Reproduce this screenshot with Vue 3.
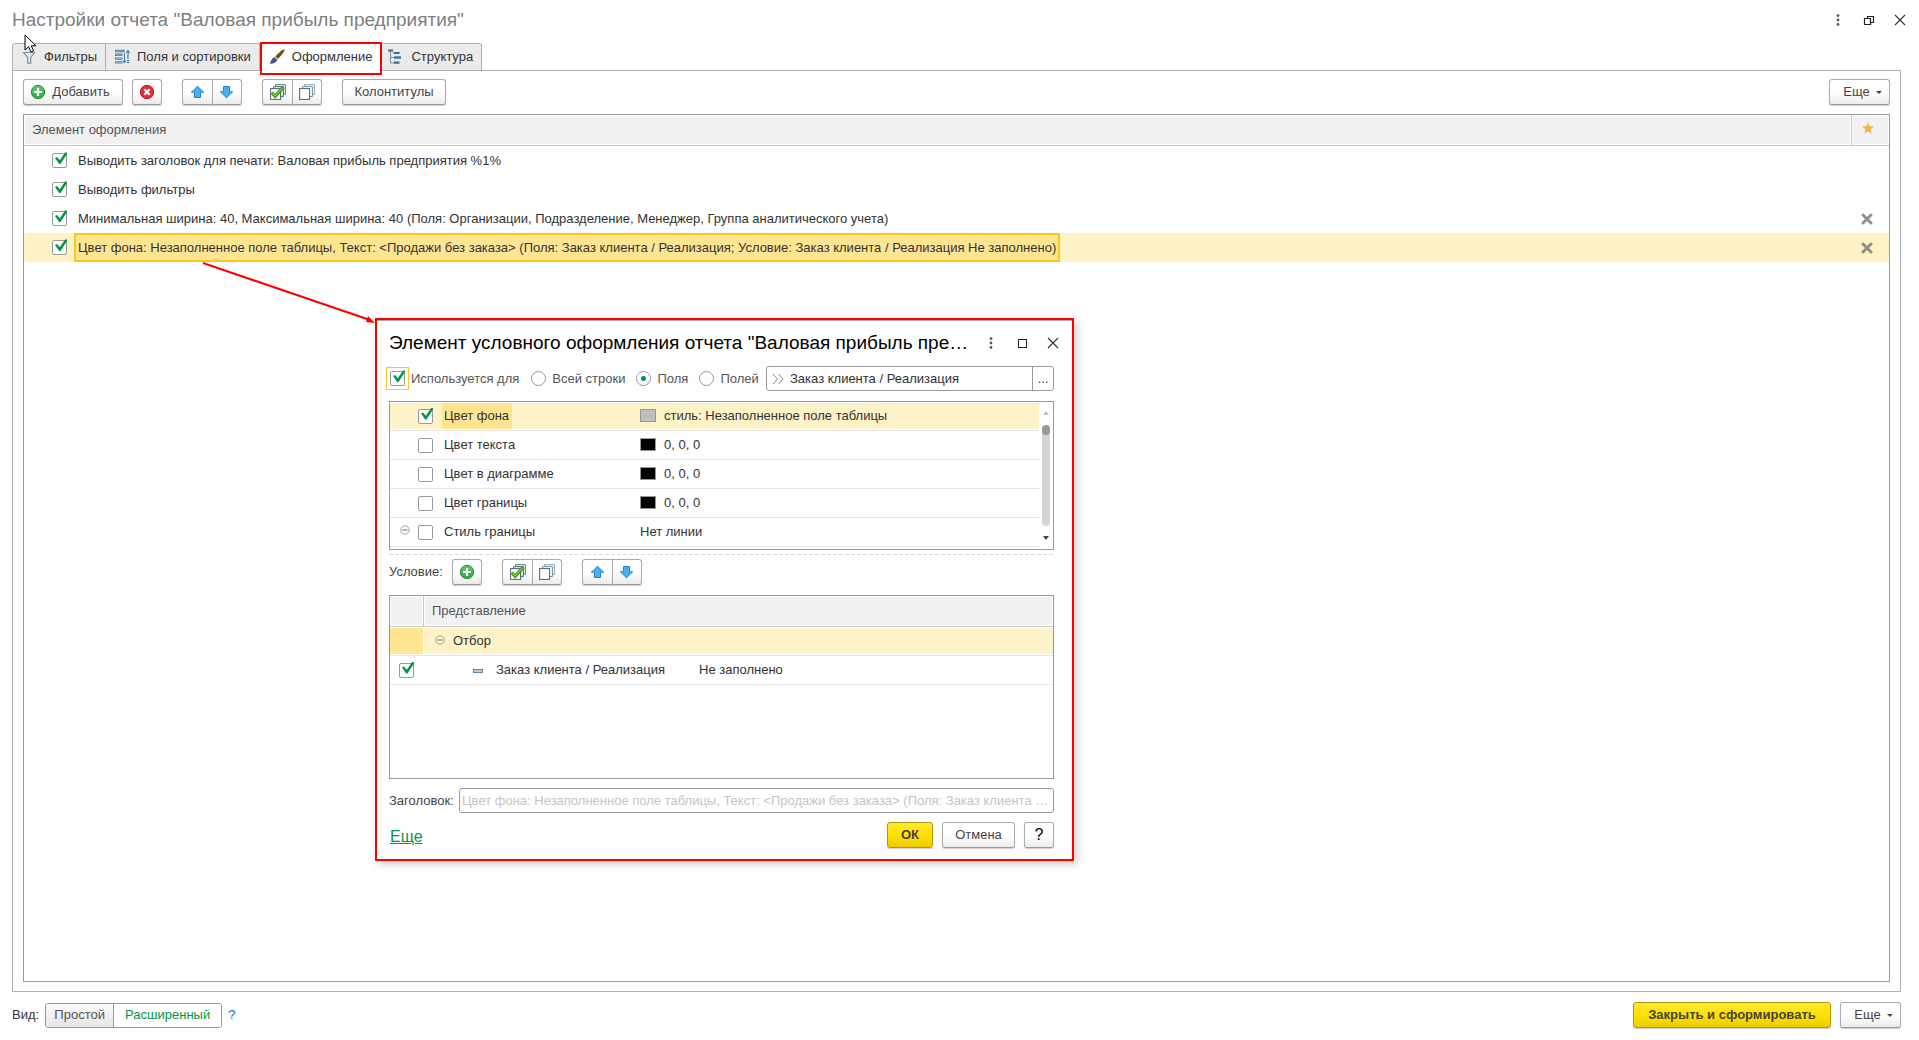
<script setup>
import { ref } from 'vue'

const tabs = [
  { id: 'filters', title: 'Фильтры', icon: 'i-funnel' },
  { id: 'fields', title: 'Поля и сортировки', icon: 'i-fields' },
  { id: 'design', title: 'Оформление', icon: 'i-brush' },
  { id: 'structure', title: 'Структура', icon: 'i-tree' }
]
const activeTab = ref('design')

const fullTitle =
  'Цвет фона: Незаполненное поле таблицы, Текст: <Продажи без заказа> (Поля: Заказ клиента / Реализация; Условие: Заказ клиента / Реализация Не заполнено)'

const items = ref([
  { on: true, text: 'Выводить заголовок для печати: Валовая прибыль предприятия %1%' },
  { on: true, text: 'Выводить фильтры' },
  {
    on: true,
    text: 'Минимальная ширина: 40, Максимальная ширина: 40 (Поля: Организации, Подразделение, Менеджер, Группа аналитического учета)',
    removable: true
  },
  { on: true, text: fullTitle, removable: true, selected: true }
])

const scope = ref('field')
const scopes = [
  { id: 'row', title: 'Всей строки' },
  { id: 'field', title: 'Поля' },
  { id: 'fields', title: 'Полей' }
]
const used = ref(true)
const field = ref('Заказ клиента / Реализация')
const caption = ref('')

const props = ref([
  { on: true, name: 'Цвет фона', swatch: 'grey', value: 'стиль: Незаполненное поле таблицы', selected: true },
  { on: false, name: 'Цвет текста', swatch: 'black', value: '0, 0, 0' },
  { on: false, name: 'Цвет в диаграмме', swatch: 'black', value: '0, 0, 0' },
  { on: false, name: 'Цвет границы', swatch: 'black', value: '0, 0, 0' },
  { on: false, name: 'Стиль границы', value: 'Нет линии', group: true }
])
const conditionOn = ref(true)
</script>

<template>
  <div class="page">
    <svg class="sprite" aria-hidden="true">
      <defs>
        <linearGradient id="g-green" x1="0" y1="0" x2="0" y2="1">
          <stop offset="0" stop-color="#5cc96b" /><stop offset="1" stop-color="#2fa745" />
        </linearGradient>
      </defs>
      <symbol id="i-plus" viewBox="0 0 16 16">
        <circle cx="8" cy="8" r="6.7" fill="url(#g-green)" stroke="#23913a" />
        <path d="M8 4v8M4 8h8" stroke="#fff" stroke-width="2.2" fill="none" />
      </symbol>
      <symbol id="i-delete" viewBox="0 0 16 16">
        <circle cx="8" cy="8" r="6.7" fill="#dd3036" stroke="#b9171f" />
        <path d="M5.3 5.3l5.4 5.4M10.7 5.3l-5.4 5.4" stroke="#fff" stroke-width="2.2" fill="none" />
      </symbol>
      <symbol id="i-up" viewBox="0 0 16 16">
        <path d="M7.5 2.2L13.7 8.3H10.5V13.5H4.5V8.3H1.3Z" fill="#45b0ee" stroke="#2a83bd" />
      </symbol>
      <symbol id="i-down" viewBox="0 0 16 16">
        <path d="M7.5 13.8L13.7 7.7H10.5V2.5H4.5V7.7H1.3Z" fill="#45b0ee" stroke="#2a83bd" />
      </symbol>
      <symbol id="i-stack" viewBox="0 0 16 16">
        <path d="M5.5 3V.6H15.4V10.5H13" fill="none" stroke="#8da3b3" />
        <path d="M3.5 5V2.6H13.4V12.5H11" fill="#fff" stroke="#6f8a9e" />
        <rect x=".6" y="4.6" width="10" height="10.8" fill="#fff" stroke="#44647c" />
      </symbol>
      <symbol id="i-stackcheck" viewBox="0 0 16 16">
        <path d="M5.5 3V.6H15.4V10.5H13" fill="#dfe9dc" stroke="#6d8593" />
        <path d="M3.5 5V2.6H13.4V12.5H11" fill="#dfe9dc" stroke="#55727e" />
        <rect x=".6" y="4.6" width="10" height="10.8" fill="#fff" stroke="#44647c" />
        <path d="M2 8.6l3.2 3.6L13 3.4" fill="none" stroke="#3c8d17" stroke-width="3.4" />
        <path d="M2.6 9.1l2.6 2.9L12.4 4" fill="none" stroke="#7ed321" stroke-width="1.5" />
      </symbol>
      <symbol id="i-funnel" viewBox="0 0 16 16">
        <path d="M2.5 3.5H13.5L9.7 8.5V14.2H6.7V8.5Z" fill="#e4e9ed" stroke="#8194a3" stroke-width="1.2" />
      </symbol>
      <symbol id="i-fields" viewBox="0 0 16 16">
        <path d="M1 2H10.5M1 5.8H8.5M1 9.6H8.5M1 13.4H8.5" fill="none" stroke="#4d7a9c" stroke-width="2.4" />
        <path d="M1.5 2H9M1.5 5.8H8M1.5 9.6H8M1.5 13.4H8" fill="none" stroke="#b6cbda" stroke-width=".7" />
        <path d="M10.5 4V13.5M9 11.6L10.5 14L12 11.6" fill="none" stroke="#2a7fb8" />
        <path d="M14 10V1.5M12.3 4L14 1.5L15.7 4" fill="none" stroke="#34658a" />
        <path d="M14 11V15" fill="none" stroke="#34658a" stroke-width="2" stroke-dasharray="1 1" />
      </symbol>
      <symbol id="i-brush" viewBox="0 0 16 16">
        <path d="M15.6.3C16.2 1.3 13 6 9 10L6.3 7.5C9.5 3.7 14.3-.2 15.6.3Z" fill="#7a4a0c" />
        <path d="M6.3 7.5L9 10L8 11L5.3 8.5Z" fill="#b9bcc4" />
        <path d="M5.2 8.3L8.2 11.1C7.6 13.8 3.6 15.6.3 14.3C2.6 13.3 2 9 5.2 8.3Z" fill="#4c4f8c" />
      </symbol>
      <symbol id="i-tree" viewBox="0 0 16 16">
        <path d="M2.5 2V14H7M2.5 8.5H7M4.5 3.8H7" fill="none" stroke="#7d8f9c" />
        <path d="M0 .6H5V2.6H0zM6 2.9H11.5V4.9H6zM6 12.6H11.5V14.8H6z" fill="#4f6a7e" />
        <path d="M6 7.3H13V9.7H6z" fill="#1f7fc4" />
      </symbol>
      <symbol id="i-dots" viewBox="0 0 12 12">
        <g fill="#555"><circle cx="6" cy="1.6" r="1.4" /><circle cx="6" cy="6" r="1.4" /><circle cx="6" cy="10.4" r="1.4" /></g>
      </symbol>
      <symbol id="i-restore" viewBox="0 0 12 12">
        <path d="M4.5 4V2.5H10.5V8.5H8M1.5 4.5H7.5V10.5H1.5Z" fill="none" stroke="#222" stroke-width="1.2" />
      </symbol>
      <symbol id="i-max" viewBox="0 0 12 12">
        <rect x="2.5" y="2.5" width="8" height="8" fill="none" stroke="#222" />
      </symbol>
      <symbol id="i-close" viewBox="0 0 12 12">
        <path d="M1 1L11 11M11 1L1 11" fill="none" stroke="#333" stroke-width="1.1" />
      </symbol>
      <symbol id="i-star" viewBox="0 0 12 12">
        <path d="M6 0L7.6 4.2L12 4.5L8.6 7.3L9.7 11.6L6 9.2L2.3 11.6L3.4 7.3L0 4.5L4.4 4.2Z" fill="#fcb045" />
      </symbol>
      <symbol id="i-cross" viewBox="0 0 12 12">
        <path d="M2 2L10 10M10 2L2 10" stroke="#6b6b6b" stroke-opacity=".75" stroke-width="3" stroke-linecap="round" />
      </symbol>
      <symbol id="i-collapse" viewBox="0 0 12 12">
        <circle cx="6" cy="6" r="4.2" fill="none" stroke="#8c8c8c" stroke-width=".8" />
        <path d="M3.5 6h5" stroke="#666" />
      </symbol>
    </svg>

    <header class="titlebar">
      <h1>Настройки отчета "Валовая прибыль предприятия"</h1>
      <div class="winbtns main">
        <button type="button" aria-label="Меню"><svg><use href="#i-dots" /></svg></button>
        <button type="button" aria-label="Восстановить"><svg><use href="#i-restore" /></svg></button>
        <button type="button" aria-label="Закрыть"><svg><use href="#i-close" /></svg></button>
      </div>
    </header>

    <nav class="tabs" role="tablist">
      <button
        v-for="t in tabs"
        :key="t.id"
        type="button"
        role="tab"
        class="tab"
        :class="{ active: t.id === activeTab }"
        :aria-selected="t.id === activeTab"
        @click="activeTab = t.id"
      >
        <svg class="ico"><use :href="'#' + t.icon" /></svg>{{ t.title }}
      </button>
    </nav>

    <main class="panel">
      <div class="toolbar">
        <button type="button" class="btn add"><svg class="ico"><use href="#i-plus" /></svg>Добавить</button>
        <button type="button" class="btn icon solo" aria-label="Удалить"><svg class="ico"><use href="#i-delete" /></svg></button>
        <div class="group">
          <button type="button" class="btn icon" aria-label="Вверх"><svg class="ico"><use href="#i-up" /></svg></button>
          <button type="button" class="btn icon" aria-label="Вниз"><svg class="ico"><use href="#i-down" /></svg></button>
        </div>
        <div class="group">
          <button type="button" class="btn icon" aria-label="Включить все"><svg class="ico"><use href="#i-stackcheck" /></svg></button>
          <button type="button" class="btn icon" aria-label="Выключить все"><svg class="ico"><use href="#i-stack" /></svg></button>
        </div>
        <button type="button" class="btn wide">Колонтитулы</button>
        <button type="button" class="btn more">Еще<span class="caret"></span></button>
      </div>

      <div class="grid">
        <table class="items">
          <colgroup>
            <col class="c-tick" />
            <col />
            <col class="c-tools" />
          </colgroup>
          <thead>
            <tr>
              <th colspan="2">Элемент оформления</th>
              <th class="tools"><svg class="small"><use href="#i-star" /></svg></th>
            </tr>
          </thead>
          <tbody>
            <tr v-for="(it, i) in items" :key="i" :class="{ selected: it.selected }">
              <td class="tick"><input v-model="it.on" type="checkbox" class="check" :aria-label="it.text" /></td>
              <td class="text"><span>{{ it.text }}</span></td>
              <td class="tools">
                <button v-if="it.removable" type="button" class="bare" aria-label="Удалить строку">
                  <svg class="small"><use href="#i-cross" /></svg>
                </button>
              </td>
            </tr>
          </tbody>
        </table>
      </div>
    </main>

    <footer class="footer">
      <span>Вид:</span>
      <div class="switch">
        <button type="button">Простой</button>
        <button type="button" class="on">Расширенный</button>
      </div>
      <a href="#" class="help">?</a>
      <button type="button" class="btn primary run">Закрыть и сформировать</button>
      <button type="button" class="btn more">Еще<span class="caret"></span></button>
    </footer>

    <section class="dialog" role="dialog" aria-labelledby="dlg-title">
      <div class="dlg-head">
        <h2 id="dlg-title">Элемент условного оформления отчета "Валовая прибыль пре…</h2>
        <div class="winbtns">
          <button type="button" aria-label="Меню"><svg><use href="#i-dots" /></svg></button>
          <button type="button" aria-label="Развернуть"><svg><use href="#i-max" /></svg></button>
          <button type="button" aria-label="Закрыть"><svg><use href="#i-close" /></svg></button>
        </div>
      </div>

      <div class="scope">
        <span class="focus"><input id="used" v-model="used" type="checkbox" class="check" /></span>
        <label for="used" class="used">Используется для</label>
        <label v-for="s in scopes" :key="s.id" class="radio">
          <input v-model="scope" type="radio" name="scope" :value="s.id" />{{ s.title }}
        </label>
        <div class="picker">
          <svg class="small" viewBox="0 0 12 12"><path d="M1 1L5.5 6L1 11M6.5 1L11 6L6.5 11" fill="none" stroke="#888" /></svg>
          <input v-model="field" type="text" aria-label="Поле" />
          <button type="button">...</button>
        </div>
      </div>

      <div class="props">
        <table>
          <tbody>
            <tr v-for="p in props" :key="p.name" :class="{ selected: p.selected }">
              <td class="exp"><svg v-if="p.group" class="small"><use href="#i-collapse" /></svg></td>
              <td class="tick"><input v-model="p.on" type="checkbox" class="check" :aria-label="p.name" /></td>
              <td class="name"><span>{{ p.name }}</span></td>
              <td class="value"><i v-if="p.swatch" :class="p.swatch"></i>{{ p.value }}</td>
            </tr>
          </tbody>
        </table>
        <div class="scroll">
          <span class="arrow up"></span>
          <div class="track"><div class="thumb"></div></div>
          <span class="arrow down"></span>
        </div>
      </div>
      <div class="splitter"></div>

      <div class="toolbar cond">
        <span class="lbl">Условие:</span>
        <button type="button" class="btn icon solo" aria-label="Добавить условие"><svg class="ico"><use href="#i-plus" /></svg></button>
        <div class="group">
          <button type="button" class="btn icon" aria-label="Включить все"><svg class="ico"><use href="#i-stackcheck" /></svg></button>
          <button type="button" class="btn icon" aria-label="Выключить все"><svg class="ico"><use href="#i-stack" /></svg></button>
        </div>
        <div class="group">
          <button type="button" class="btn icon" aria-label="Вверх"><svg class="ico"><use href="#i-up" /></svg></button>
          <button type="button" class="btn icon" aria-label="Вниз"><svg class="ico"><use href="#i-down" /></svg></button>
        </div>
      </div>

      <div class="filter">
        <table>
          <colgroup>
            <col class="c-mark" />
            <col class="c-field" />
            <col />
          </colgroup>
          <thead>
            <tr><th class="mark"></th><th colspan="2">Представление</th></tr>
          </thead>
          <tbody>
            <tr class="selected">
              <td class="mark"></td>
              <td colspan="2" class="root"><svg class="small"><use href="#i-collapse" /></svg>Отбор</td>
            </tr>
            <tr>
              <td class="mark"><input v-model="conditionOn" type="checkbox" class="check" aria-label="Заказ клиента / Реализация" /></td>
              <td><span class="dash"></span>Заказ клиента / Реализация</td>
              <td>Не заполнено</td>
            </tr>
          </tbody>
        </table>
      </div>

      <div class="caption">
        <label for="caption">Заголовок:</label>
        <input id="caption" v-model="caption" type="text" :placeholder="fullTitle" />
      </div>

      <div class="actions">
        <a href="#">Еще</a>
        <button type="button" class="btn primary ok">ОК</button>
        <button type="button" class="btn cancel">Отмена</button>
        <button type="button" class="btn solo q">?</button>
      </div>
    </section>

    <svg class="pointer-line" viewBox="0 0 180 66" aria-hidden="true">
      <path d="M3 2L170 59" stroke="#f00" stroke-width="2" fill="none" />
      <path d="M175 62L166 61L168 55Z" fill="#f00" />
    </svg>
    <svg class="cursor" viewBox="0 0 14 20" aria-hidden="true">
      <path d="M1 1V16L4.6 12.7L7 18L9.6 17L7.3 11.8H12Z" fill="#fff" stroke="#000" />
    </svg>
  </div>
</template>

<style>
body {
  margin: 0;
  background: #fff;
}
</style>

<style scoped>
.page {
  position: relative;
  display: flex;
  flex-direction: column;
  box-sizing: border-box;
  min-height: 100vh;
  padding: 0 18px 12px 12px;
  font: 13px/16px "Liberation Sans", Arial, sans-serif;
  color: #333;
}
.page *,
.page *::before,
.page *::after {
  box-sizing: border-box;
}
button,
input {
  font: inherit;
  color: inherit;
  margin: 0;
}
button {
  padding: 0;
  cursor: default;
}
.sprite {
  position: absolute;
  width: 0;
  height: 0;
}
.ico {
  width: 16px;
  height: 16px;
  flex: none;
}
.small {
  width: 12px;
  height: 12px;
  flex: none;
}

/* window title */
.titlebar {
  display: flex;
  justify-content: space-between;
  align-items: center;
  height: 43px;
  padding-bottom: 3px;
}
h1,
h2 {
  margin: 0;
  font-weight: 400;
  font-size: 19px;
  line-height: 24px;
}
h1 {
  color: #808080;
}
.winbtns {
  display: flex;
  gap: 19px;
}
.winbtns.main {
  margin-right: -5px;
}
.winbtns button,
.bare {
  display: flex;
  border: 0;
  background: none;
}
.winbtns svg {
  width: 12px;
  height: 12px;
}

/* tabs */
.tabs {
  display: flex;
  height: 28px;
  margin-bottom: -1px;
}
.tab {
  display: flex;
  align-items: center;
  gap: 7px;
  padding: 0 8px;
  border: 1px solid #b0b0b0;
  border-left-width: 0;
  background: #ebebeb;
}
.tab:first-child {
  border-left-width: 1px;
  border-top-left-radius: 3px;
}
.tab:last-child {
  padding-left: 6px;
  border-top-right-radius: 3px;
}
.tab.active {
  position: relative;
  height: 33px;
  margin-top: -1px;
  padding: 0 8px 4px 7px;
  border: 2px solid #f00;
  background: #fff;
}

/* main panel */
.panel {
  display: flex;
  flex-direction: column;
  flex: 1;
  padding: 8px 10px 9px;
  border: 1px solid #b0b0b0;
}
.toolbar {
  display: flex;
  align-items: center;
}
.btn {
  display: flex;
  align-items: center;
  justify-content: center;
  height: 26px;
  border: 1px solid #ababab;
  border-bottom-color: #999;
  border-radius: 3px;
  background: linear-gradient(#fff 50%, #ececec);
  box-shadow: 0 1px 1px #ccc;
  color: #444;
}
.add {
  width: 100px;
  gap: 6px;
  margin-right: 9px;
  padding-right: 6px;
}
.solo {
  width: 30px;
}
.group {
  display: flex;
  margin-left: 20px;
}
.group .btn {
  width: 30px;
}
.group .btn:first-child {
  width: 31px;
  border-radius: 3px 0 0 3px;
}
.group .btn:last-child {
  margin-left: -1px;
  border-radius: 0 3px 3px 0;
}
.wide {
  width: 104px;
  margin-left: 20px;
}
.more {
  width: 61px;
  gap: 6px;
  padding-left: 6px;
}
.toolbar .more {
  margin-left: auto;
}
.caret {
  border: 3px solid transparent;
  border-top-color: #444;
  border-bottom-width: 0;
}
.grid {
  flex: 1;
  margin-top: 9px;
  border: 1px solid #999;
}
table {
  width: 100%;
  border-spacing: 0;
  table-layout: fixed;
}
th,
td {
  padding: 0;
  text-align: left;
  font-weight: 400;
  white-space: nowrap;
}
th {
  height: 31px;
  border-bottom: 1px solid #c8c8c8;
  background: #f1f1f1;
  box-shadow: inset 0 0 0 1px #fff;
  color: #555;
}
td {
  height: 29px;
}
.c-tick {
  width: 50px;
}
.c-tools {
  width: 38px;
}
.items thead th:first-child {
  padding-left: 8px;
}
.items .tick {
  padding-left: 28px;
}
.items .tools {
  padding-left: 10px;
}
.items th.tools {
  border-left: 1px solid #c8c8c8;
}
.items .text span {
  display: inline-block;
  padding: 4px 2px;
  border: 2px solid transparent;
  line-height: 17px;
  vertical-align: top;
}
.selected td {
  background: #fdf2c8;
}
.items .selected .text span {
  border-color: #fcc81e;
  background: #ffe591;
}

/* tick box with a mark that rises over its frame */
.check {
  position: relative;
  display: block;
  appearance: none;
  width: 15px;
  height: 15px;
  border: 1px solid #999;
  border-radius: 2px;
  background: #fff;
}
.check:checked::after {
  content: "";
  position: absolute;
  left: 2px;
  top: -2px;
  width: 12px;
  height: 12px;
  background: #009646;
  clip-path: polygon(0 50%, 17% 42%, 40% 68%, 84% 4%, 100% 4%, 100% 16%, 46% 100%, 34% 100%);
}

/* bottom bar */
.footer {
  display: flex;
  align-items: center;
  margin-top: 10px;
}
.switch {
  display: flex;
  height: 25px;
  margin: 0 6px;
  border: 1px solid #999;
  border-radius: 3px;
  overflow: hidden;
}
.switch button {
  width: 67px;
  border: 0;
  background: linear-gradient(#fafafa, #e6e6e6);
  color: #555;
}
.switch .on {
  width: 108px;
  border-left: 1px solid #999;
  background: #fff;
  color: #009646;
}
.help {
  color: #0a6fbd;
  text-decoration: none;
}
.primary {
  border-color: #b09a00;
  background: linear-gradient(#ffe838, #ffe000 50%, #ecce00);
  font-weight: 700;
}
.run {
  width: 198px;
  margin: 0 9px 0 auto;
}

/* floating window */
.dialog {
  position: absolute;
  left: 375px;
  top: 318px;
  width: 699px;
  padding: 11px 18px 11px 12px;
  border: 2px solid #f00;
  background: #fff;
  box-shadow: inset 0 2px 0 -1px #aaa, 3px 3px 8px rgba(0, 0, 0, 0.2);
}
.dlg-head {
  display: flex;
  justify-content: space-between;
  align-items: center;
  height: 24px;
  margin-right: -5px;
}
.dlg-head h2 {
  white-space: nowrap;
  color: #000;
}
.scope {
  display: flex;
  align-items: center;
  margin: 11px 0 10px -3px;
  color: #555;
}
.focus {
  padding: 3px;
  border: 1px solid #fcc81e;
}
.used {
  margin: 0 1px 0 2px;
}
.radio {
  display: flex;
  align-items: center;
  gap: 6px;
  margin-left: 11px;
}
.radio input {
  appearance: none;
  width: 15px;
  height: 15px;
  border: 1px solid #999;
  border-radius: 50%;
  background: #fff;
}
.radio input:checked {
  background: radial-gradient(circle, #009646 2px, #fff 3px);
}
.picker {
  display: flex;
  align-items: center;
  width: 288px;
  height: 25px;
  margin-left: auto;
  padding-left: 5px;
  border: 1px solid #999;
  border-radius: 3px;
  color: #333;
}
.picker input {
  flex: 1;
  min-width: 0;
  padding: 0 6px;
  border: 0;
  outline: 0;
}
.picker button {
  align-self: stretch;
  width: 21px;
  border: 0;
  border-left: 1px solid #999;
  background: none;
}
.props {
  display: flex;
  height: 149px;
  border: 1px solid #999;
}
.props table {
  flex: 1;
  align-self: flex-start;
  width: auto;
}
.props td {
  border-bottom: 1px solid #e4e4e4;
}
.props .selected td {
  box-shadow: inset 0 1px #fff, inset 0 -1px #fff;
}
.props .exp {
  width: 28px;
  padding-left: 9px;
}
.props .tick {
  width: 24px;
}
.props .name {
  width: 198px;
}
.props .name span {
  display: inline-block;
  padding: 5px 3px 5px 2px;
  line-height: 16px;
}
.props .selected .name span {
  background: #ffe591;
}
.value i {
  display: inline-block;
  width: 16px;
  height: 13px;
  margin-right: 8px;
  border: 1px solid #999;
  vertical-align: -2px;
}
.value .grey {
  background: #c0c0c0;
}
.value .black {
  background: #000;
}
.scroll {
  display: flex;
  flex-direction: column;
  align-items: center;
  gap: 10px;
  width: 14px;
  padding: 9px 0 9px;
}
.arrow {
  border: 3px solid transparent;
}
.arrow.up {
  border-top-width: 0;
  border-bottom: 4px solid #c0c0c0;
}
.arrow.down {
  border-bottom-width: 0;
  border-top: 4px solid #444;
}
.track {
  flex: 1;
  width: 8px;
  border-radius: 4px;
  background: #d4d4d4;
}
.thumb {
  width: 8px;
  height: 10px;
  border-radius: 4px;
  background: #999;
}
.splitter {
  height: 1px;
  margin-top: 4px;
  background: repeating-linear-gradient(90deg, #ddd 0 4px, #fff 4px 6px);
}
.cond {
  margin: 4px 0 10px;
}
.lbl {
  width: 63px;
  color: #444;
}
.filter {
  height: 184px;
  border: 1px solid #999;
}
.c-mark {
  width: 34px;
}
.c-field {
  width: 275px;
}
.filter .mark {
  padding-left: 9px;
}
.filter th.mark {
  border-right: 1px solid #c8c8c8;
}
.filter th + th {
  padding-left: 8px;
}
.filter td {
  border-bottom: 1px solid #e4e4e4;
}
.filter .selected td {
  box-shadow: inset 0 1px #fff, inset 0 -1px #fff;
}
.filter .selected .mark {
  background: #ffe591;
  box-shadow: inset -1px 1px #fff, inset 0 -1px #fff;
}
.root .small {
  margin: 0 7px 0 10px;
  vertical-align: -1px;
}
.dash {
  display: inline-block;
  width: 10px;
  height: 4px;
  margin: 0 13px 0 49px;
  border: 1px solid #5f86a5;
  background: #b6cde0;
  vertical-align: 1px;
}
.caption {
  display: flex;
  align-items: center;
  margin-top: 9px;
  color: #444;
}
.caption label {
  width: 70px;
}
.caption input {
  flex: 1;
  min-width: 0;
  height: 25px;
  padding: 0 2px;
  border: 1px solid #999;
  border-radius: 3px;
  text-overflow: ellipsis;
}
.caption input::placeholder {
  color: #c4c4c4;
  opacity: 1;
}
.actions {
  display: flex;
  align-items: center;
  gap: 9px;
  margin-top: 9px;
}
.actions a {
  margin: 3px auto 0 1px;
  font-size: 16px;
  line-height: 20px;
  color: #009646;
}
.ok {
  width: 46px;
}
.cancel {
  width: 73px;
}
.q {
  font-size: 16px;
  color: #000;
}

/* callout and mouse */
.pointer-line {
  position: absolute;
  left: 200px;
  top: 261px;
  width: 180px;
  height: 66px;
}
.cursor {
  position: absolute;
  left: 24px;
  top: 34px;
  width: 14px;
  height: 20px;
}
</style>
